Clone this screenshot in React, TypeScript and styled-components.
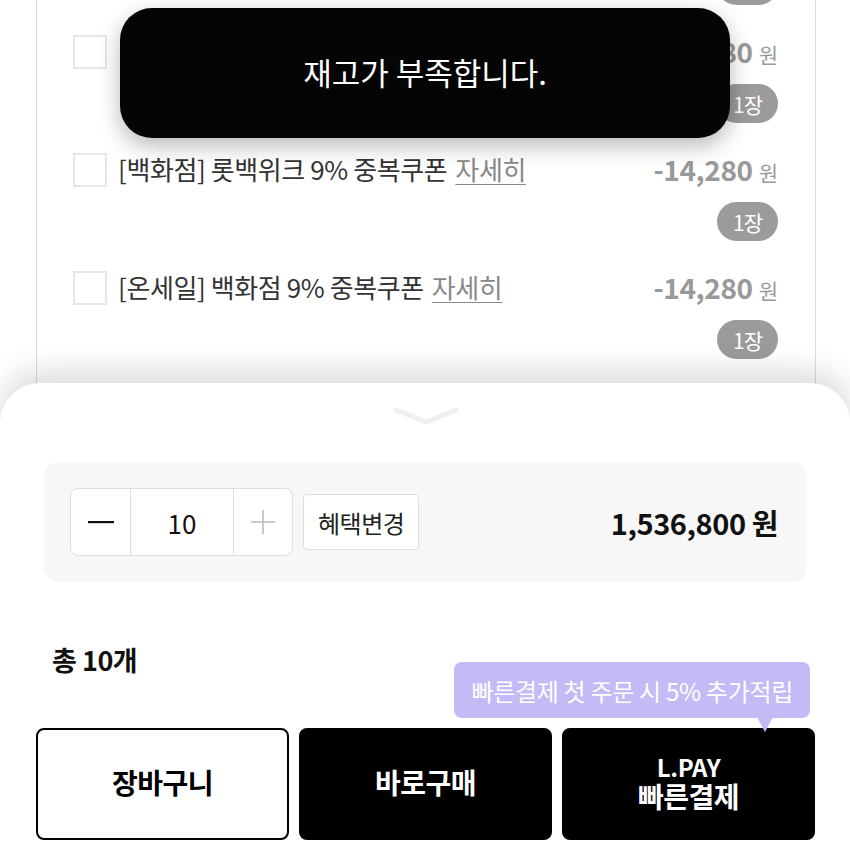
import React from 'react'
import styled, { createGlobalStyle } from 'styled-components'

const GlobalStyle = createGlobalStyle`
  html, body {
    margin: 0;
    padding: 0;
    background: #fff;
  }
  body {
    font-family: 'Noto Sans CJK KR', 'Noto Sans', sans-serif;
    color: #111;
  }
`

const Screen = styled.div`
  position: relative;
  width: 850px;
  height: 867px;
  overflow: hidden;
  background: #fff;
`

const CouponPanel = styled.div`
  margin: -85px 34px 0 36px;
  padding: 0 37px 0 36px;
  border-left: 1px solid #dcdcdc;
  border-right: 1px solid #dcdcdc;
  height: 560px;
`

const CouponRow = styled.div`
  display: flex;
  align-items: flex-start;
  height: 118px;
`

const CheckBox = styled.span`
  flex: none;
  width: 34px;
  height: 34px;
  margin-top: 2px;
  box-sizing: border-box;
  border: 2px solid #e6e6e6;
  background: #fff;
  margin-right: 11px;
`

const CouponName = styled.span`
  flex: 1;
  font-size: 26px;
  line-height: 36px;
  letter-spacing: -0.4px;
  color: #333;
  white-space: nowrap;
`

const DetailLink = styled.span`
  margin-left: 8px;
  color: #888;
  text-decoration: underline;
  text-underline-offset: 4px;
  text-decoration-thickness: 1px;
`

const PriceCol = styled.div`
  display: flex;
  flex-direction: column;
  align-items: flex-end;
  gap: 12px;
`

const Discount = styled.div`
  display: flex;
  align-items: baseline;
  gap: 6px;
  line-height: 36px;
  color: #999;
`

const DiscountAmount = styled.span`
  font-size: 28px;
  font-weight: 700;
  letter-spacing: -0.4px;
`

const Won = styled.span`
  font-size: 21px;
`

const CountBadge = styled.span`
  display: inline-flex;
  align-items: center;
  justify-content: center;
  width: 61px;
  height: 39px;
  border-radius: 20px;
  background: #9b9b9b;
  color: #fff;
  font-size: 21px;
  letter-spacing: -1px;
`

const Toast = styled.div`
  position: absolute;
  left: 120px;
  top: 8px;
  width: 610px;
  height: 130px;
  border-radius: 32px;
  background: #050505;
  box-shadow: 0 8px 22px rgba(0, 0, 0, 0.28);
  display: flex;
  align-items: center;
  justify-content: center;
  padding-bottom: 4px;
  box-sizing: border-box;
  color: #fff;
  font-size: 31px;
  letter-spacing: 0;
`

const Sheet = styled.div`
  position: absolute;
  left: 0;
  right: 0;
  bottom: 0;
  height: 484px;
  box-sizing: border-box;
  padding: 0 35px 0 36px;
  background: #fff;
  border-radius: 40px 40px 0 0;
  box-shadow: 0 -12px 30px rgba(0, 0, 0, 0.14);
  display: flex;
  flex-direction: column;
`

const Handle = styled.div`
  display: flex;
  justify-content: center;
  padding-top: 22px;
  height: 57px;
  box-sizing: border-box;
`

const OptionCard = styled.div`
  margin: 22px 9px 0 8px;
  height: 120px;
  border-radius: 14px;
  background: #f7f7f7;
  display: flex;
  align-items: center;
  padding: 0 28px 0 26px;
`

const Stepper = styled.div`
  display: flex;
  height: 68px;
  box-sizing: border-box;
  border: 1.5px solid #dedede;
  border-radius: 8px;
  background: #fff;
  overflow: hidden;
`

const StepCell = styled.div<{ $w: number; $muted?: boolean }>`
  width: ${(p) => p.$w}px;
  display: flex;
  align-items: center;
  justify-content: center;
  font-size: 26px;
  color: ${(p) => (p.$muted ? '#bbb' : '#111')};
  & + & {
    border-left: 1.5px solid #dedede;
  }
`

const BenefitButton = styled.button`
  margin-left: 10px;
  height: 56px;
  padding: 0 14px;
  border: 1.5px solid #dedede;
  border-radius: 4px;
  background: #fff;
  font-family: inherit;
  font-size: 24px;
  letter-spacing: -0.5px;
  color: #222;
`

const TotalPrice = styled.div`
  margin-left: auto;
  display: flex;
  align-items: baseline;
  gap: 6px;
  font-size: 29px;
  font-weight: 700;
  letter-spacing: -0.4px;
  color: #111;
`

const Summary = styled.div`
  margin: 61px 0 0 16px;
  font-size: 27px;
  font-weight: 700;
  line-height: 34px;
  letter-spacing: -0.5px;
`

const ButtonRow = styled.div`
  position: relative;
  margin-top: 51px;
  display: grid;
  grid-template-columns: repeat(3, 1fr);
  gap: 10px;
`

const ActionButton = styled.button<{ $primary?: boolean }>`
  height: 112px;
  box-sizing: border-box;
  border-radius: 8px;
  border: 2px solid #000;
  background: ${(p) => (p.$primary ? '#000' : '#fff')};
  color: ${(p) => (p.$primary ? '#fff' : '#000')};
  font-family: inherit;
  font-size: 28px;
  font-weight: 700;
  letter-spacing: -0.5px;
  display: flex;
  flex-direction: column;
  align-items: center;
  justify-content: center;
  line-height: 1.15;
  padding-bottom: 4px;
`

const PayLabel = styled.span`
  font-size: 24px;
  letter-spacing: -0.3px;
`

const Tooltip = styled.div`
  position: absolute;
  right: 5px;
  bottom: calc(100% + 10px);
  height: 56px;
  padding: 0 17px;
  border-radius: 8px;
  background: #c4baf6;
  color: #fff;
  font-size: 24px;
  letter-spacing: -0.3px;
  display: flex;
  align-items: center;
  white-space: nowrap;
  &::after {
    content: '';
    position: absolute;
    right: 37px;
    bottom: -14px;
    border-left: 8px solid transparent;
    border-right: 8px solid transparent;
    border-top: 15px solid #c4baf6;
  }
`

const coupons = [
  { name: '[백화점] 브랜치X 9% 쿠폰' },
  { name: '[백화점] 브랜치X 9% 쿠폰' },
  { name: '[백화점] 롯백위크 9% 중복쿠폰' },
  { name: '[온세일] 백화점 9% 중복쿠폰' },
]

export default function App() {
  return (
    <>
      <GlobalStyle />
      <Screen>
        <CouponPanel>
          {coupons.map((c, i) => (
            <CouponRow key={i}>
              <CheckBox />
              <CouponName>
                {c.name}
                <DetailLink>자세히</DetailLink>
              </CouponName>
              <PriceCol>
                <Discount>
                  <DiscountAmount>-14,280</DiscountAmount>
                  <Won>원</Won>
                </Discount>
                <CountBadge>1장</CountBadge>
              </PriceCol>
            </CouponRow>
          ))}
        </CouponPanel>

        <Toast>재고가 부족합니다.</Toast>

        <Sheet>
          <Handle>
            <svg width="70" height="22" viewBox="0 0 70 22">
              <path
                d="M5 5 L35 17 L65 5"
                fill="none"
                stroke="#efefef"
                strokeWidth="5"
                strokeLinecap="round"
                strokeLinejoin="round"
              />
            </svg>
          </Handle>
          <OptionCard>
            <Stepper>
              <StepCell $w={59}>
                <svg width="26" height="4" viewBox="0 0 26 4">
                  <rect x="0" y="1" width="26" height="2.2" fill="#111" />
                </svg>
              </StepCell>
              <StepCell $w={102}>10</StepCell>
              <StepCell $w={58} $muted>
                <svg width="26" height="26" viewBox="0 0 26 26">
                  <path d="M13 1 V25 M1 13 H25" stroke="#bbb" strokeWidth="1.6" />
                </svg>
              </StepCell>
            </Stepper>
            <BenefitButton>혜택변경</BenefitButton>
            <TotalPrice>
              1,536,800<span>원</span>
            </TotalPrice>
          </OptionCard>
          <Summary>총 10개</Summary>
          <ButtonRow>
            <ActionButton>장바구니</ActionButton>
            <ActionButton $primary>바로구매</ActionButton>
            <ActionButton $primary>
              <PayLabel>L.PAY</PayLabel>
              빠른결제
            </ActionButton>
            <Tooltip>빠른결제 첫 주문 시 5% 추가적립</Tooltip>
          </ButtonRow>
        </Sheet>
      </Screen>
    </>
  )
}
